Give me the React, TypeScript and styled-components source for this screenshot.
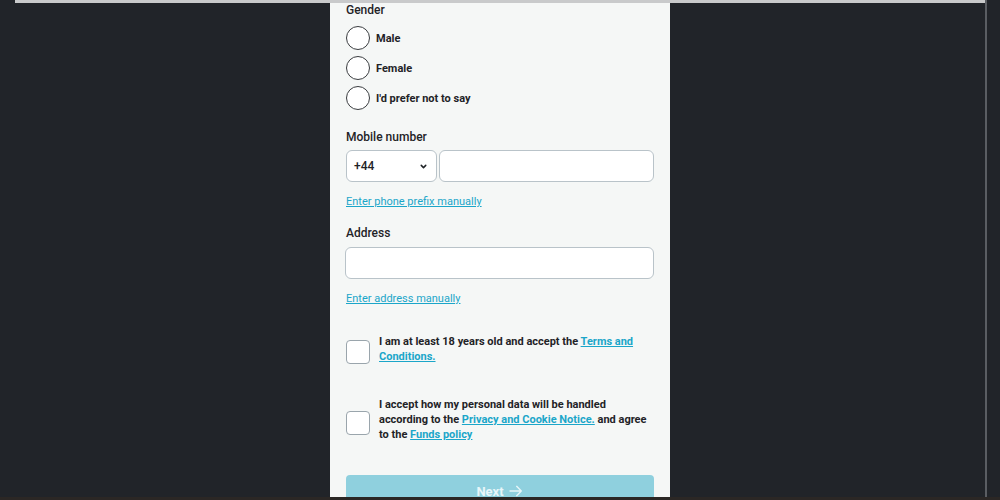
import styled, { createGlobalStyle } from "styled-components";

const GlobalStyle = createGlobalStyle`
  html, body {
    margin: 0;
    padding: 0;
    background: #212429;
  }
  body {
    font-family: Roboto, "Liberation Sans", sans-serif;
  }
`;

const Screen = styled.div`
  width: 1000px;
  height: 500px;
  overflow: hidden;
  display: flex;
  flex-direction: column;
  background: #212429;
`;

const Main = styled.div`
  flex: 1;
  display: flex;
  min-height: 0;
`;

const Stage = styled.div`
  width: 985px;
  display: flex;
  flex-direction: column;
`;

const TopBar = styled.div`
  height: 3px;
  margin-left: 15px;
  background: #c9cacb;
  flex-shrink: 0;
`;

const Divider = styled.div`
  width: 2px;
  background: #5a5d62;
`;

const BottomStrip = styled.div`
  height: 3px;
  background: #2b2725;
`;

const Panel = styled.div`
  margin-left: 330px;
  width: 340px;
  flex: 1;
  box-sizing: border-box;
  padding: 0 16px;
  background: #f5f7f6;
  color: #1f2327;
  overflow: hidden;
`;

const Label = styled.div<{ $top: number }>`
  margin-top: ${(p) => p.$top}px;
  font-size: 12px;
  font-weight: 500;
  line-height: 14px;
`;

const RadioList = styled.div`
  margin-top: 9px;
  display: flex;
  flex-direction: column;
  gap: 6px;
`;

const RadioRow = styled.label`
  display: flex;
  align-items: center;
  gap: 6px;
  font-size: 11px;
  font-weight: 700;
`;

const Circle = styled.span`
  width: 24px;
  height: 24px;
  box-sizing: border-box;
  border: 1px solid #3a3d40;
  border-radius: 50%;
  background: #fff;
`;

const PhoneRow = styled.div`
  margin-top: 6px;
  display: flex;
  gap: 2px;
`;

const Field = styled.div<{ $width?: number }>`
  height: 32px;
  box-sizing: border-box;
  border: 1px solid #b9c3c9;
  border-radius: 6px;
  background: #fff;
  ${(p) => (p.$width ? `width: ${p.$width}px;` : "flex: 1;")}
`;

const Select = styled(Field)`
  display: flex;
  align-items: center;
  justify-content: space-between;
  padding: 0 8px 0 7px;
  font-size: 12px;
  font-weight: 500;
`;

const AddressField = styled(Field)`
  margin-top: 7px;
  margin-left: -1px;
`;

const Link = styled.a<{ $top: number }>`
  display: block;
  margin-top: ${(p) => p.$top}px;
  font-size: 11px;
  line-height: 14px;
  color: #1ba6c9;
  text-decoration: underline;
`;

const Consent = styled.div<{ $top: number }>`
  margin-top: ${(p) => p.$top}px;
  display: flex;
  align-items: center;
  gap: 9px;
`;

const Box = styled.span`
  width: 24px;
  height: 24px;
  margin-top: 6px;
  flex-shrink: 0;
  box-sizing: border-box;
  border: 1px solid #9aa5ac;
  border-radius: 4px;
  background: #fff;
`;

const ConsentText = styled.div`
  font-size: 11px;
  font-weight: 700;
  line-height: 15px;
  width: 272px;

  a {
    color: #1ba6c9;
    text-decoration: underline;
  }
`;

const NextButton = styled.button`
  margin-top: 33px;
  width: 308px;
  height: 36px;
  border: none;
  border-radius: 4px;
  background: #8fd0de;
  color: #e8f6f9;
  font-family: inherit;
  font-size: 13px;
  font-weight: 700;
  display: flex;
  align-items: center;
  justify-content: center;
  gap: 4px;
  padding: 0 0 4px;
`;

const Chevron = () => (
  <svg width="9" height="9" viewBox="0 0 24 24" fill="none" stroke="#1f2327" strokeWidth="4" strokeLinecap="round" strokeLinejoin="round">
    <path d="M6 9l6 6 6-6" />
  </svg>
);

const Arrow = () => (
  <svg width="16" height="14" viewBox="0 0 24 20" fill="none" stroke="#e8f6f9" strokeWidth="2" strokeLinecap="round" strokeLinejoin="round">
    <path d="M3 10h17M13 3l7 7-7 7" />
  </svg>
);

const genders = ["Male", "Female", "I'd prefer not to say"];

export default function App() {
  return (
    <Screen>
      <GlobalStyle />
      <Main>
        <Stage>
          <TopBar />
          <Panel>
            <Label $top={0}>Gender</Label>
            <RadioList>
              {genders.map((g) => (
                <RadioRow key={g}>
                  <Circle />
                  {g}
                </RadioRow>
              ))}
            </RadioList>

            <Label $top={20}>Mobile number</Label>
            <PhoneRow>
              <Select $width={91}>
                +44
                <Chevron />
              </Select>
              <Field />
            </PhoneRow>
            <Link $top={13}>Enter phone prefix manually</Link>

            <Label $top={17}>Address</Label>
            <AddressField />
            <Link $top={13}>Enter address manually</Link>

            <Consent $top={28}>
              <Box />
              <ConsentText>
                I am at least 18 years old and accept the <a>Terms and Conditions.</a>
              </ConsentText>
            </Consent>

            <Consent $top={33}>
              <Box />
              <ConsentText>
                I accept how my personal data will be handled according to the{" "}
                <a>Privacy and Cookie Notice.</a> and agree to the <a>Funds policy</a>
              </ConsentText>
            </Consent>

            <NextButton>
              Next
              <Arrow />
            </NextButton>
          </Panel>
        </Stage>
        <Divider />
      </Main>
      <BottomStrip />
    </Screen>
  );
}
